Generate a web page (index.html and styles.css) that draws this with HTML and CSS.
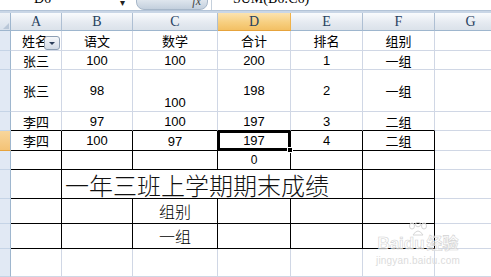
FILE: index.html
```html
<!DOCTYPE html>
<html lang="zh">
<head>
<meta charset="utf-8">
<link rel="stylesheet" href="styles.css">
</head>
<body>
<div class="app">
  <div class="fbar">
    <div class="namebox"><span class="clip">D6</span></div>
    <div class="nbarrow">▾</div>
    <div class="pill"><span class="fx">fx</span></div>
    <div class="formula"><span class="clip">=SUM(B6:C6)</span></div>
  </div>
  <div class="band"></div>
  <div class="sheet">
    <div class="corner"></div>
    <div class="ch">A</div><div class="ch">B</div><div class="ch">C</div><div class="ch chsel">D</div><div class="ch">E</div><div class="ch">F</div><div class="ch">G</div>

    <div class="rh"></div>
    <div class="c filt">姓名<span class="fbtn"></span></div><div class="c">语文</div><div class="c">数学</div><div class="c">合计</div><div class="c">排名</div><div class="c">组别</div><div class="c"></div>

    <div class="rh"></div>
    <div class="c">张三</div><div class="c">100</div><div class="c bot">100</div><div class="c">200</div><div class="c">1</div><div class="c">一组</div><div class="c"></div>

    <div class="rh"></div>
    <div class="c">张三</div><div class="c">98</div><div class="c bot">100</div><div class="c">198</div><div class="c">2</div><div class="c">一组</div><div class="c"></div>

    <div class="rh"></div>
    <div class="c kb">李四</div><div class="c kb">97</div><div class="c bot kb">100</div><div class="c kb">197</div><div class="c kb">3</div><div class="c kb">二组</div><div class="c"></div>

    <div class="rh rhsel"></div>
    <div class="c k">李四</div><div class="c k">100</div><div class="c bot k">97</div><div class="c k sel">197</div><div class="c k">4</div><div class="c k">二组</div><div class="c"></div>

    <div class="rh"></div>
    <div class="c k"></div><div class="c k"></div><div class="c k"></div><div class="c k small">0</div><div class="c k"></div><div class="c k"></div><div class="c"></div>

    <div class="rh"></div>
    <div class="c k"></div><div class="c k title">一年三班上学期期末成绩</div><div class="c k"></div><div class="c"></div>

    <div class="rh"></div>
    <div class="c k"></div><div class="c k"></div><div class="c k big">组别</div><div class="c k"></div><div class="c k"></div><div class="c k"></div><div class="c"></div>

    <div class="rh"></div>
    <div class="c k"></div><div class="c k"></div><div class="c k big">一组</div><div class="c k"></div><div class="c k"></div><div class="c k"></div><div class="c"></div>

    <div class="rh"></div>
    <div class="c"></div><div class="c"></div><div class="c"></div><div class="c"></div><div class="c"></div><div class="c"></div><div class="c"></div>
  </div>
  <div class="wm">
    <svg class="paw" width="24" height="14" viewBox="0 0 24 14"><g fill="none" stroke="#d6d6d6" stroke-width="1"><ellipse cx="6" cy="4" rx="2.5" ry="3"/><ellipse cx="12" cy="2.5" rx="2.5" ry="2.3"/><ellipse cx="18" cy="4" rx="2.5" ry="3"/><path d="M7 13 Q12 5 17 13 Z"/></g></svg>
    <div class="wm1">Baidu<span class="wm2">经验</span></div>
    <div class="wm3">jingyan.baidu.com</div>
  </div>
</div>
</body>
</html>
```
FILE: styles.css
```css
html, body {
  margin: 0;
  padding: 0;
  background: #fff;
  overflow: hidden;
}
.app {
  width: 491px;
  height: 277px;
  position: relative;
  overflow: hidden;
  font-family: "Liberation Sans", "Noto Sans CJK SC", sans-serif;
  font-size: 13px;
  color: #000;
}
.fbar {
  height: 10px;
  display: flex;
  align-items: flex-start;
  background: #fff;
  overflow: hidden;
}
.clip {
  display: block;
  margin-top: -9px;
  line-height: 16px;
  font-size: 14px;
  font-family: "Liberation Serif", serif;
}
.namebox {
  width: 120px;
  padding-left: 34px;
  box-sizing: border-box;
}
.nbarrow {
  width: 16px;
  font-size: 10px;
  line-height: 6px;
  color: #222;
}
.pill {
  width: 72px;
  height: 14px;
  margin-top: -4px;
  border-radius: 0 0 8px 8px;
  background: linear-gradient(#e8edf3, #c3cfdd);
  border: 1px solid #a7b7c9;
  box-sizing: border-box;
  display: flex;
  justify-content: flex-end;
  padding-right: 6px;
}
.fx {
  font-family: "Liberation Serif", serif;
  font-style: italic;
  font-size: 12px;
  line-height: 10px;
  margin-top: -1px;
  color: #444;
}
.formula {
  flex: 1;
  margin-left: 3px;
  padding-left: 13px;
  border-left: 1px solid #c5d0dc;
  height: 10px;
}
.band {
  height: 3px;
  background: #c9d6e6;
  border-top: 1px solid #b2c3d7;
  box-sizing: border-box;
}
.sheet {
  display: grid;
  grid-template-columns: 11px 51px 71px 85px 73px 72px 72px 72px;
  grid-template-rows: 18px 20px 19px 42px 19px 20px 19px 29px 25px 25px 28px;
}
.corner {
  background: linear-gradient(#eef2f7, #d8e1ec);
  border-right: 1px solid #9eb6ce;
  border-bottom: 1px solid #9eb6ce;
  box-sizing: border-box;
  position: relative;
}
.corner::after {
  content: "";
  position: absolute;
  right: 1px;
  bottom: 1px;
  border-left: 6px solid transparent;
  border-bottom: 6px solid #b9c7d8;
}
.ch {
  background: linear-gradient(#f9fbfd, #e4e9f0 60%, #dbe2ea);
  border-right: 1px solid #aebfd3;
  border-bottom: 1px solid #9eb6ce;
  box-sizing: border-box;
  display: flex;
  align-items: center;
  justify-content: center;
  font-family: "Liberation Serif", serif;
  font-size: 14px;
  color: #27415f;
}
.chsel {
  background: linear-gradient(#fbe3b0, #f7cf80 55%, #f3c064);
  border-right: 1px solid #f0b24a;
  border-bottom: 1px solid #e6a33c;
}
.rh {
  background: #e1e9f4;
  border-right: 1px solid #9eb6ce;
  border-bottom: 1px solid #c5d4e6;
  box-sizing: border-box;
}
.rhsel {
  background: linear-gradient(#f8d69c, #f4c376);
  border-bottom: 1px solid #e6a33c;
}
.c {
  border-right: 1px solid #d0d7e5;
  border-bottom: 1px solid #d0d7e5;
  box-sizing: border-box;
  display: flex;
  align-items: center;
  justify-content: center;
  white-space: nowrap;
  position: relative;
}
.bot {
  align-items: flex-end;
  padding-bottom: 1px;
}
.kb {
  border-bottom-color: #000;
}
.k {
  border-right-color: #000;
  border-bottom-color: #000;
}
.filt {
  justify-content: flex-start;
  padding-left: 11px;
}
.fbtn {
  position: absolute;
  left: 33px;
  top: 5px;
  width: 16px;
  height: 14px;
  box-sizing: border-box;
  border: 1px solid #8e9fb3;
  border-radius: 3px;
  background: linear-gradient(#f6f8fb, #d3dbe6);
}
.fbtn::after {
  content: "";
  position: absolute;
  left: 4px;
  top: 5px;
  border-left: 3px solid transparent;
  border-right: 3px solid transparent;
  border-top: 3px solid #2c3e5a;
}
.sel {
  box-shadow: inset 0 0 0 2px #000, inset 0 0 0 3px #fff;
}
.sel::after {
  content: "";
  position: absolute;
  right: -3px;
  bottom: -3px;
  width: 4px;
  height: 4px;
  background: #000;
  border: 1px solid #fff;
  z-index: 2;
}
.small {
  font-size: 12px;
}
.title {
  grid-column: span 4;
  justify-content: flex-start;
  padding-left: 3px;
  font-family: "Noto Sans CJK SC", sans-serif;
  font-size: 24px;
  font-weight: 300;
  color: #111;
}
.big {
  font-size: 16px;
  font-family: "Noto Sans CJK SC", sans-serif;
  font-weight: 300;
}
.wm {
  position: absolute;
  left: 372px;
  top: 222px;
  width: 92px;
  display: flex;
  flex-direction: column;
  align-items: center;
  pointer-events: none;
}
.paw {
  display: block;
}
.wm1 {
  font-family: "Liberation Sans", "Noto Sans CJK SC", sans-serif;
  font-size: 17px;
  font-weight: bold;
  line-height: 16px;
  color: rgba(255, 255, 255, 0.6);
  -webkit-text-stroke: 0.6px #d2d2d2;
}
.wm2 {
  font-size: 16px;
  margin-left: 2px;
}
.wm3 {
  font-size: 10px;
  line-height: 12px;
  margin-top: 3px;
  color: #dcdcdc;
  letter-spacing: 0.2px;
}
```
